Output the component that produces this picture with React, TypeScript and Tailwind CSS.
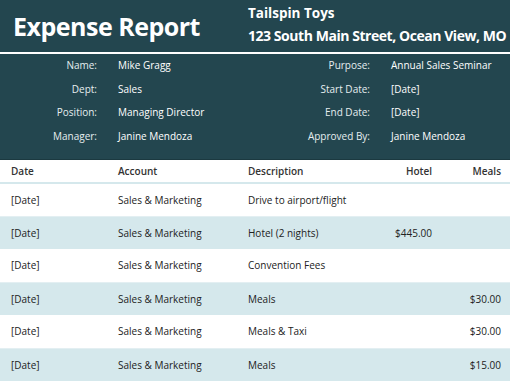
import React from "react";

const info: [string, string, string, string][] = [
  ["Name:", "Mike Gragg", "Purpose:", "Annual Sales Seminar"],
  ["Dept:", "Sales", "Start Date:", "[Date]"],
  ["Position:", "Managing Director", "End Date:", "[Date]"],
  ["Manager:", "Janine Mendoza", "Approved By:", "Janine Mendoza"],
];

const rows: [string, string, string, string, string][] = [
  ["[Date]", "Sales & Marketing", "Drive to airport/flight", "", ""],
  ["[Date]", "Sales & Marketing", "Hotel (2 nights)", "$445.00", ""],
  ["[Date]", "Sales & Marketing", "Convention Fees", "", ""],
  ["[Date]", "Sales & Marketing", "Meals", "", "$30.00"],
  ["[Date]", "Sales & Marketing", "Meals & Taxi", "", "$30.00"],
  ["[Date]", "Sales & Marketing", "Meals", "", "$15.00"],
];

export default function App() {
  return (
    <div
      className="w-[510px] h-[382px] overflow-hidden bg-white"
      style={{ fontFamily: '"Open Sans", "Noto Sans", sans-serif' }}
    >
      <div className="h-[52px] bg-[#23464f] flex text-white">
        <div className="w-[248px] shrink-0 pl-[13px] flex items-center">
          <span className="text-[25px] font-bold leading-none tracking-[-0.5px]">Expense Report</span>
        </div>
        <div className="flex flex-col whitespace-nowrap pt-[3px] min-w-0">
          <span className="text-[13.5px] font-bold leading-[20px]">Tailspin Toys</span>
          <span className="text-[14px] font-bold leading-[26px] tracking-[-0.45px]">123 South Main Street, Ocean View, MO</span>
        </div>
      </div>
      <div className="h-[2px] bg-white" />
      <div className="h-[106px] bg-[#23464f] text-white text-[10px] flex flex-col border-b border-[#1b3940]">
        {info.map((r, i) => (
          <div key={i} className="h-[23.5px] flex items-center">
            <span className="w-[97px] text-right text-[#e6eef0]">{r[0]}</span>
            <span className="w-[173px] pl-[21px]">{r[1]}</span>
            <span className="w-[100px] text-right text-[#e6eef0]">{r[2]}</span>
            <span className="pl-[21px]">{r[3]}</span>
          </div>
        ))}
      </div>
      <div className="text-[10px] text-[#222]">
        <div className="h-[24px] flex items-center font-semibold text-[#333] border-b-2 border-[#d5e8ec]">
          <span className="w-[118px] pl-[11px]">Date</span>
          <span className="w-[130px]">Account</span>
          <span className="w-[120px]">Description</span>
          <span className="w-[64px] text-right">Hotel</span>
          <span className="w-[69px] text-right">Meals</span>
        </div>
        {rows.map((r, i) => (
          <div
            key={i}
            className={`${i === 0 ? "h-[32px]" : "h-[33px]"} flex items-center ${i % 2 === 1 ? "bg-[#d5e8ec] border-t border-[#e3eff2]" : "bg-white"}`}
          >
            <span className="w-[118px] pl-[11px]">{r[0]}</span>
            <span className="w-[130px]">{r[1]}</span>
            <span className="w-[120px]">{r[2]}</span>
            <span className="w-[64px] text-right">{r[3]}</span>
            <span className="w-[69px] text-right">{r[4]}</span>
          </div>
        ))}
      </div>
    </div>
  );
}
